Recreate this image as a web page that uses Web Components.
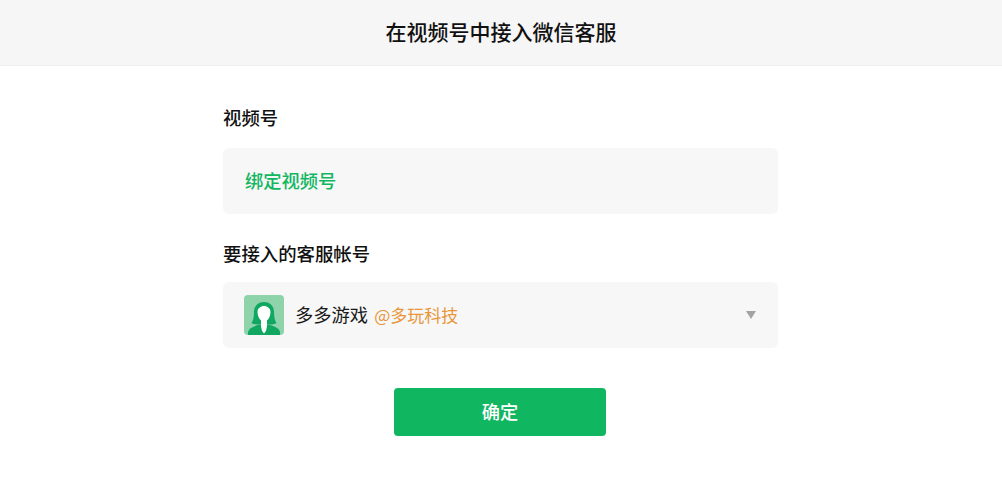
<!DOCTYPE html>
<html lang="zh"><head><meta charset="utf-8"><style>
html,body{margin:0;padding:0;background:#fff;overflow:hidden}
body{font-family:"Noto Sans CJK SC","Liberation Sans",sans-serif}
</style></head><body>
<app-page></app-page>
<script>
const def=(n,h)=>customElements.define(n,class extends HTMLElement{constructor(){super();this.attachShadow({mode:'open'}).innerHTML=h}});
def('top-bar',`<style>:host{display:flex;align-items:center;justify-content:center;height:61px;padding-bottom:4px;background:#f6f6f6;border-bottom:1px solid #efefef;box-sizing:content-box;font-size:21px;font-weight:500;color:#111}</style><slot></slot>`);
def('field-label',`<style>:host{display:block;font-size:18.4px;line-height:26px;font-weight:500;color:#111;margin-bottom:18px}</style><slot></slot>`);
def('field-box',`<style>:host{display:flex;align-items:center;height:66px;background:#f7f7f7;border-radius:6px;padding:0 21px;box-sizing:border-box;font-size:18.3px}</style><slot></slot>`);
def('user-avatar',`<style>:host{display:block;width:40px;height:40px;margin-right:11px}svg{display:block;border-radius:4px}</style>
<svg width="40" height="40" viewBox="0 0 40 40"><rect width="40" height="40" fill="#8fd3aa"/><path d="M20 7c-6.500 0-10 4.500-10 10 0 4.500-.5 8-2.500 11 2.500 1.500 6 2 9 1h7c3 1 6.500.5 9-1-2-3-2.500-6.500-2.500-11 0-5.500-3.500-10-10-10z" fill="#10a860"/><path d="M4 40v-3c1-4 6-6 12-7.500h8c6 1.500 11 3.500 12 7.500v3z" fill="#10a860"/><path d="M20 11c-3.500 0-6.500 2.500-6.500 6 0 3.500 1.500 7 3.500 8.500v5.500l1 5 2 2.500 2-2.500 1-5v-5.500c2-1.500 3.500-5 3.500-8.500 0-3.500-3-6-6.500-6z" fill="#fff"/></svg>`);
def('down-caret',`<style>:host{display:block;width:0;height:0;margin-left:auto;margin-right:1px;border-left:5.500px solid transparent;border-right:5.500px solid transparent;border-top:8.500px solid #a3a3a3}</style>`);
def('primary-button',`<style>:host{display:flex;align-items:center;justify-content:center;width:212px;height:47.500px;padding-bottom:0;margin-left:171px;background:#10b660;border-radius:4px;color:#fff;font-size:18.3px;font-weight:500}span{padding-bottom:1px}</style><span><slot></slot></span>`);
def('app-page',`<style>:host{display:block}main{width:555px;margin-left:223px;padding:38px 0 0}
.f{display:block;margin-bottom:26px}.green{color:#10b660;font-weight:500;margin-left:1px;padding-bottom:2px}.name{color:#1a1a1a;padding-bottom:2px}.org{color:#e8963a;margin-left:6px;font-size:17px;padding-bottom:2px}.f2{margin-bottom:40px}.f2 field-label{margin-bottom:16px}
</style>
<top-bar>在视频号中接入微信客服</top-bar>
<main>
<div class="f"><field-label>视频号</field-label><field-box><span class="green">绑定视频号</span></field-box></div>
<div class="f f2"><field-label>要接入的客服帐号</field-label><field-box><user-avatar></user-avatar><span class="name">多多游戏</span><span class="org">@多玩科技</span><down-caret></down-caret></field-box></div>
<primary-button>确定</primary-button>
</main>`);
</script></body></html>
